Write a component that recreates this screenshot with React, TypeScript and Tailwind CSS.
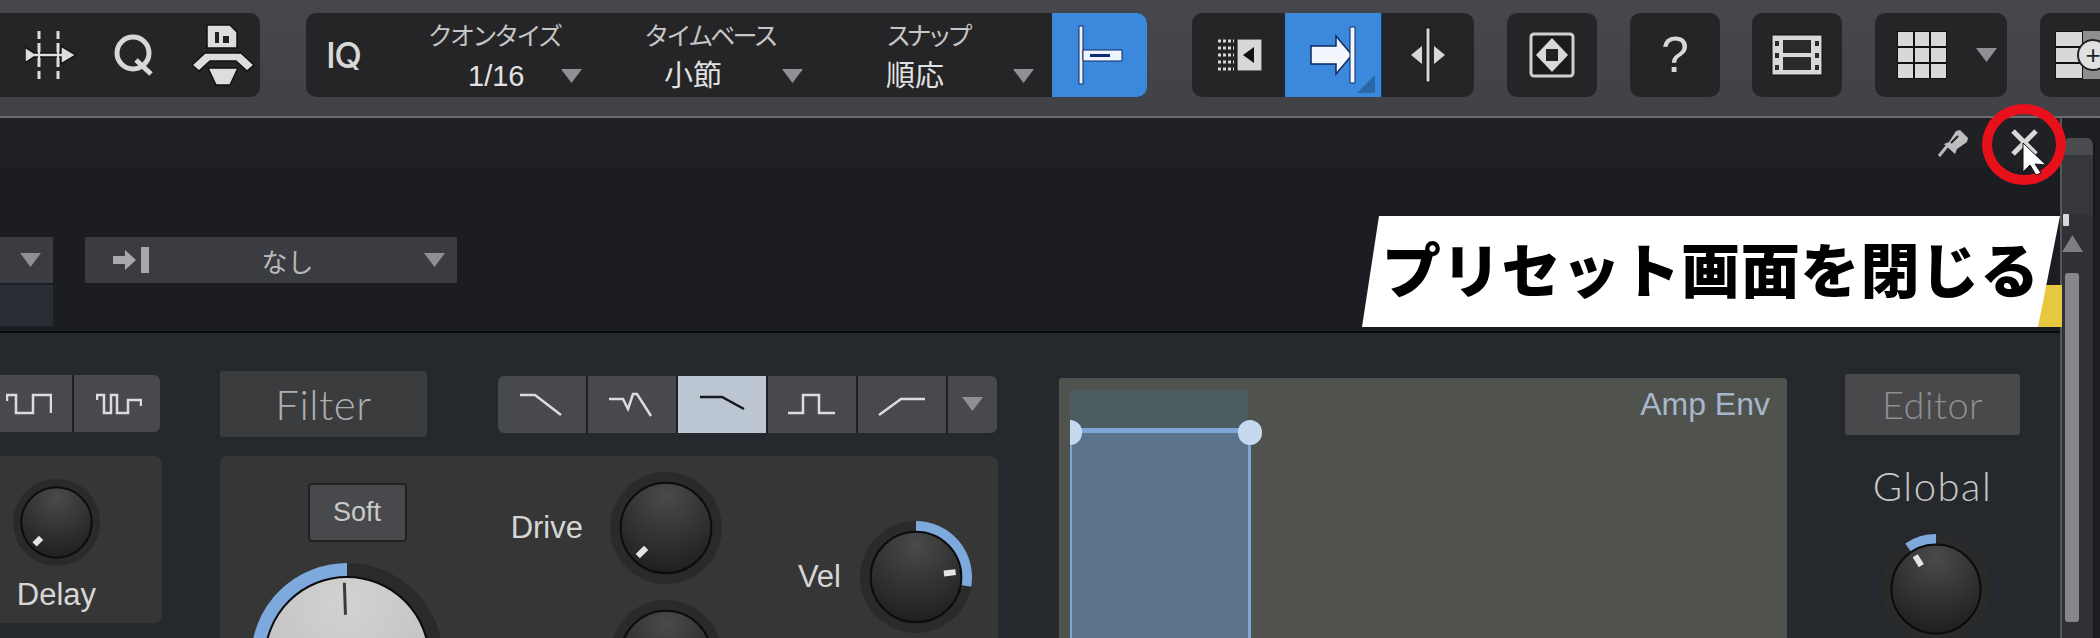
import React from "react";

const sans = "font-['Liberation_Sans','Noto_Sans_CJK_JP',sans-serif]";
const jp = "font-['Noto_Sans_CJK_JP',sans-serif]";

function Caret({ className = "" }: { className?: string }) {
  return (
    <svg viewBox="0 0 21 14" className={`w-[21px] h-[14px] shrink-0 ${className}`}>
      <path d="M0 0H21L10.5 14Z" fill="#8f9093" />
    </svg>
  );
}

function Arc({ r, from, to, width, color, size }: { r: number; from: number; to: number; width: number; color: string; size: number }) {
  const c = size / 2;
  const pt = (a: number) => {
    const t = ((a - 90) * Math.PI) / 180;
    return `${c + r * Math.cos(t)} ${c + r * Math.sin(t)}`;
  };
  return <path d={`M${pt(from)}A${r} ${r} 0 0 1 ${pt(to)}`} fill="none" stroke={color} strokeWidth={width} />;
}

// dial with a ring, optional value arc and a short tick
function Knob({ size = 112, angle, arc, light = false }: { size?: number; angle: number; arc?: [number, number]; light?: boolean }) {
  const c = size / 2;
  const outer = c;
  const inner = light ? c * 0.854 : c * 0.81;
  const t = ((angle - 90) * Math.PI) / 180;
  const id = `k${size}${angle}`;
  return (
    <svg width={size} height={size} viewBox={`0 0 ${size} ${size}`} className="shrink-0 block">
      <defs>
        <radialGradient id={id} cx="50%" cy="15%" r="85%">
          <stop offset="0%" stopColor={light ? "#d2d2d2" : "#4a4a4a"} />
          <stop offset="100%" stopColor={light ? "#bdbdbd" : "#1f1f1f"} />
        </radialGradient>
      </defs>
      <circle cx={c} cy={c} r={outer} fill="#2a2a2b" />
      {arc && <Arc size={size} r={(outer + inner) / 2} from={arc[0]} to={arc[1]} width={outer - inner} color="#7ea9dc" />}
      <circle cx={c} cy={c} r={inner} fill={`url(#${id})`} stroke="#0c0c0e" strokeWidth={2} />
      <line
        x1={c + Math.cos(t) * inner * (light ? 0.54 : 0.62)}
        y1={c + Math.sin(t) * inner * (light ? 0.54 : 0.62)}
        x2={c + Math.cos(t) * inner * (light ? 0.93 : 0.88)}
        y2={c + Math.sin(t) * inner * (light ? 0.93 : 0.88)}
        stroke={light ? "#3a3a3a" : "#e4e4e4"}
        strokeWidth={light ? 3 : 6}
      />
    </svg>
  );
}

function SelectCell({ label, value, labelClass, valueClass, rowClass }: { label: string; value: string; labelClass: string; valueClass: string; rowClass: string }) {
  return (
    <div className={`flex flex-col shrink-0 ${jp}`}>
      <div className={`text-[25px] leading-[30px] mt-[6px] text-[#c6c6c6] text-center ${labelClass}`}>{label}</div>
      <div className={`flex items-center mt-[10px] ${rowClass}`}>
        <span className={`text-[29px] leading-[34px] text-[#e2e2e2] ${sans} ${valueClass}`}>{value}</span>
        <Caret />
      </div>
    </div>
  );
}

function Box({ w, children, className = "" }: { w: number; children: React.ReactNode; className?: string }) {
  return (
    <div className={`h-[84px] flex items-center justify-center bg-[#252527] rounded-[10px] shrink-0 ${className}`} style={{ width: w }}>
      {children}
    </div>
  );
}

const stroke = { stroke: "#111", strokeWidth: 1.5 };

function Toolbar() {
  return (
    <div className="h-[118px] flex items-start pt-[13px] bg-gradient-to-b from-[#45474c] to-[#404247] border-b-2 border-[#6c6e72] shrink-0">
      {/* first group runs off the left edge */}
      <div className="w-[260px] h-[84px] bg-[#252527] rounded-r-[10px] shrink-0 flex items-center">
        <svg width="51" height="50" viewBox="0 0 51 50" className="ml-[25px]">
          <path d="M14 1v8M14 13v24M14 41v8M33 1v8M33 13v24M33 41v8" stroke="#ddd" strokeWidth="3" />
          <path d="M0 17l9 6h27v-7l15 9-15 9v-7H9l-9 6Z" fill="#ddd" {...stroke} />
          <path d="M14 14v22M33 14v22" stroke="#ddd" strokeWidth="2" />
        </svg>
        <div className="ml-[38px] w-[40px] flex justify-center">
          <svg width="40" height="42" viewBox="0 0 40 42">
            <ellipse cx="19" cy="19" rx="16" ry="16" fill="none" stroke="#d8d8d8" strokeWidth="5" />
            <path d="M22 26l15 14" stroke="#d8d8d8" strokeWidth="5" />
          </svg>
        </div>
        <svg width="62" height="62" viewBox="0 0 62 62" className="ml-[38px]">
          <path d="M15 1h23l7 7v16H15Z" fill="#ddd" {...stroke} />
          <path d="M23 8h4v11h-4ZM31 12h6v7h-6Z" fill="#222" />
          <path d="M0 41l13-12h36l13 12-7 6-11-10H18L7 47Z" fill="#ddd" {...stroke} />
          <path d="M16 44h30l-8 17H24Z" fill="#ddd" {...stroke} />
        </svg>
      </div>

      <div className="ml-[46px] w-[841px] h-[84px] bg-[#252527] rounded-[10px] shrink-0 flex overflow-hidden">
        <div className="w-[113px] shrink-0 pl-[20px] flex items-center font-['Inter',sans-serif] font-medium text-[36px] tracking-[-1.5px] text-[#d8d8d8]">IQ</div>
        <div className="w-[221px] shrink-0">
          <SelectCell label="クオンタイズ" value="1/16" labelClass="w-[150px] tracking-[-2.8px]" rowClass="pl-[49px]" valueClass="w-[93px]" />
        </div>
        <div className="w-[214px] shrink-0">
          <SelectCell label="タイムベース" value="小節" labelClass="w-[140px] tracking-[-2.8px]" rowClass="pl-[24px]" valueClass="w-[118px]" />
        </div>
        <div className="flex-1">
          <SelectCell label="スナップ" value="順応" labelClass="w-[146px] tracking-[-4.5px]" rowClass="pl-[32px]" valueClass="w-[127px]" />
        </div>
        <div className="w-[95px] shrink-0 bg-[#3b88dc] flex items-center justify-center">
          <svg width="48" height="60" viewBox="0 0 48 60">
            <path d="M3 1h4v58H3Z" fill="#eef4ff" stroke="#0b2a63" strokeWidth="1" />
            <path d="M7 25h39v11H7Z" fill="#eef4ff" stroke="#0b2a63" strokeWidth="1" />
            <path d="M14 29h20v3H14Z" fill="#0b2a70" />
          </svg>
        </div>
      </div>

      <div className="ml-[45px] w-[282px] h-[84px] bg-[#252527] rounded-[10px] shrink-0 flex overflow-hidden">
        <div className="w-[93px] shrink-0 flex items-center justify-center">
          <svg width="46" height="32" viewBox="0 0 46 32">
            <path d="M2 2h16M2 9h16M2 16h16M2 23h16M2 30h16" stroke="#d8d8d8" strokeWidth="3" strokeDasharray="3 2" />
            <path d="M21 0h25v32H21Z" fill="#d8d8d8" stroke="#111" />
            <path d="M38 8v16l-11-8Z" fill="#111" />
          </svg>
        </div>
        <div className="w-[97px] shrink-0 bg-[#3b88dc] relative flex items-center justify-center border-r border-[#123a78]">
          <svg width="46" height="58" viewBox="0 0 46 58">
            <path d="M1 20h25V10l16 19-16 19V38H1Z" fill="#f2f5fb" stroke="#0b2a63" strokeWidth="1.5" />
            <path d="M40 1h5v56h-5Z" fill="#f2f5fb" stroke="#0b2a63" strokeWidth="1" />
          </svg>
          <div className="absolute right-[6px] bottom-[4px] w-[18px] h-[18px] bg-[#2b66a8] [clip-path:polygon(100%_0,100%_100%,0_100%)]" />
        </div>
        <div className="flex-1 flex items-center justify-center">
          <svg width="36" height="56" viewBox="0 0 36 56">
            <path d="M16 1h4v54h-4Z" fill="#d8d8d8" stroke="#111" strokeWidth="1" />
            <path d="M12 19v18L1 28ZM24 19v18l11-9Z" fill="#d8d8d8" />
          </svg>
        </div>
      </div>

      <Box w={90} className="ml-[33px]">
        <svg width="46" height="46" viewBox="0 0 46 46">
          <rect x="2" y="2" width="42" height="42" rx="3" fill="#1b1b1c" stroke="#d0d0d0" strokeWidth="3" />
          <path d="M23 6l16 17-16 17L7 23Z" fill="#d8d8d8" />
          <path d="M17 17h12v12H17Z" fill="#222" />
        </svg>
      </Box>
      <Box w={90} className={`ml-[33px] text-[50px] text-[#d8d8d8] ${sans}`}>?</Box>
      <Box w={90} className="ml-[32px]">
        <svg width="52" height="44" viewBox="0 0 52 44">
          <path d="M1 2h50v40H1Z" fill="#d8d8d8" stroke="#111" />
          <path d="M12 7h28v13H12ZM12 24h28v13H12Z" fill="#2a2a2a" />
          <path d="M4 8h4v5H4ZM4 20h4v5H4ZM4 32h4v5H4ZM44 8h4v5h-4ZM44 20h4v5h-4ZM44 32h4v5h-4Z" fill="#2a2a2a" />
        </svg>
      </Box>
      <Box w={132} className="ml-[33px] gap-[29px] justify-start pl-[22px]">
        <div className="w-[50px] h-[48px] grid grid-cols-3 gap-[2px] bg-[#111] p-[1px] shrink-0">
          {Array.from({ length: 9 }).map((_, i) => (
            <span key={i} className="bg-[#d8d8d8]" />
          ))}
        </div>
        <Caret />
      </Box>
      <div className="ml-[33px] w-[61px] h-[84px] bg-[#252527] rounded-l-[10px] shrink-0 flex items-center pl-[15px] overflow-hidden">
        <div className="relative w-[60px] h-[48px] shrink-0 flex">
          <div className="w-[28px] grid grid-rows-3 gap-[2px] bg-[#111] p-[1px]">
            <span className="bg-[#d8d8d8]" />
            <span className="bg-[#d8d8d8]" />
            <span className="bg-[#d8d8d8]" />
          </div>
          <div className="flex-1 bg-[#8e8e8e]" />
          <div className={`absolute left-[22px] top-[8px] w-[32px] h-[32px] rounded-full bg-[#e0e0e0] border-2 border-[#222] flex items-center justify-center text-[26px] leading-none text-[#222] ${sans}`}>+</div>
        </div>
      </div>
    </div>
  );
}

function Wave({ d, w = 60 }: { d: string; w?: number }) {
  return (
    <svg width={w} height="24" viewBox={`0 0 ${w} 24`}>
      <path d={d} fill="none" stroke="#dcdcdc" strokeWidth="2.5" />
    </svg>
  );
}

function FilterType({ d, active = false }: { d: string; active?: boolean }) {
  return (
    <div className={`w-[90px] shrink-0 flex items-center justify-center border-r-2 border-[#1e2024] ${active ? "bg-[#bcc6d3]" : "bg-[#47494c]"}`}>
      <svg width="50" height="26" viewBox="0 0 50 26">
        <path d={d} fill="none" stroke={active ? "#16181c" : "#dcdcdc"} strokeWidth="2.5" />
      </svg>
    </div>
  );
}

function Lower() {
  return (
    <div className={`flex-1 min-h-0 flex items-start bg-[#25282c] border-t-2 border-[#08090a] overflow-hidden ${sans}`}>
      <div className="w-[162px] shrink-0 pt-[42px]">
        <div className="w-[160px] h-[57px] rounded-r-[6px] bg-[#47494c] flex overflow-hidden">
          <div className="w-[74px] flex items-center pl-[6px] border-r-2 border-[#1e2024]">
            <Wave w={46} d="M1 9V3H10V21H27V3H45V21" />
          </div>
          <div className="flex-1 flex items-center pl-[22px]">
            <Wave w={46} d="M1 8V3H8V21H15V3H21V21H32V8H45V14" />
          </div>
        </div>
        <div className="mt-[24px] h-[167px] bg-[#363636] rounded-r-[8px] pt-[23px] pl-[13px]">
          <Knob size={87} angle={-135} />
          <div className="w-[87px] text-center text-[31px] leading-[30px] text-[#d6d6d6] mt-[14px]">Delay</div>
        </div>
      </div>

      <div className="ml-[58px] w-[778px] shrink-0 pt-[38px]">
        <div className="h-[66px] flex items-center">
          <div className="w-[207px] h-[66px] bg-[#3b3c3e] rounded-[3px] flex items-center justify-center font-['Lato',sans-serif] font-light text-[42px] tracking-[0.5px] text-[#aeaeae]">Filter</div>
          <div className="ml-[71px] w-[499px] h-[57px] rounded-[6px] overflow-hidden flex">
            <FilterType d="M3 4h15l26 20" />
            <FilterType d="M2 8h14l5 10 5-15h4l14 22" />
            <FilterType active d="M3 6h22l22 12" />
            <FilterType d="M1 22h15V4h16v18h16" />
            <FilterType d="M2 24l22-16h24" />
            <div className="flex-1 bg-[#47494c] flex items-center justify-center">
              <Caret />
            </div>
          </div>
        </div>
        <div className="mt-[19px] h-[300px] bg-[#363636] rounded-t-[8px] flex items-start">
          <div className="w-[254px] shrink-0 pt-[27px] flex flex-col items-center">
            <div className="ml-[20px] w-[99px] h-[59px] rounded-[4px] bg-[#47494c] border-2 border-[#222] flex items-center justify-center text-[27px] text-[#c9c9c9]">Soft</div>
            <div className="mt-[21px]">
              <Knob size={192} angle={-2} arc={[-90, 0]} light />
            </div>
          </div>
          <div className="w-[248px] shrink-0 pt-[16px] flex flex-col items-end gap-[16px]">
            <div className="flex items-center gap-[27px]">
              <span className="text-[31px] text-[#d6d6d6]">Drive</span>
              <Knob angle={-135} />
            </div>
            <Knob angle={-134} />
          </div>
          <div className="flex-1 pt-[65px] pr-[26px] flex items-center justify-end gap-[19px]">
            <span className="text-[31px] text-[#d6d6d6]">Vel</span>
            <Knob angle={83} arc={[0, 100]} />
          </div>
        </div>
      </div>

      <div className="ml-[61px] mt-[45px] w-[728px] h-[300px] shrink-0 bg-[#50524e] rounded-t-[3px] relative flex pl-[11px] pt-[12px]">
        <div className="w-[181px] shrink-0 flex flex-col">
          <div className="w-[178px] h-[38px] bg-[#4c5c61]" />
          <div className="flex-1 bg-[#5b7489] border-t-[5px] border-r-[3px] border-l-[2px] border-[#7da7d6]" />
        </div>
        <div className="flex-1 flex justify-end pr-[17px]">
          <span className="text-[32px] leading-[30px] mt-[-1px] text-[#a7b7cb]">Amp Env</span>
        </div>
        <div className="absolute left-[11px] top-[42px] w-[12px] h-[25px] rounded-r-full bg-[#c7d9ee]" />
        <div className="absolute left-[179px] top-[42px] w-[24px] h-[25px] rounded-full bg-[#c7d9ee]" />
      </div>

      <div className="ml-[58px] mt-[41px] w-[175px] shrink-0 flex flex-col items-center">
        <div className="w-[175px] h-[61px] bg-[#49494b] rounded-[3px] flex items-center justify-center font-['Lato',sans-serif] font-light text-[38px] tracking-[0.5px] text-[#8f8f8f]">Editor</div>
        <div className="mt-[28px] font-['Lato',sans-serif] font-light text-[40px] leading-[46px] tracking-[1.5px] text-[#c8c8c8]">Global</div>
        <div className="mt-[25px] ml-[7px]">
          <Knob size={110} angle={-32} arc={[-34, 0]} />
        </div>
      </div>
    </div>
  );
}

function ScrollStrip() {
  return (
    <div className="w-[40px] shrink-0 bg-[#1d1f22] border-l-2 border-[#55575b] pt-[20px] pr-[5px]">
      <div className="h-full rounded-t-[8px] bg-[#2f3136] border-r-2 border-[#15171a] overflow-hidden relative">
        <div className="h-[17px] bg-[#4a4b4f]" />
        <div className="h-[60px] bg-[#35373b]" />
        <svg width="21" height="17" viewBox="0 0 21 17" className="block mt-[20px]">
          <path d="M10.5 0L21 17H0Z" fill="#7d7d82" />
        </svg>
        <div className="ml-[3px] mt-[21px] w-[14px] h-[349px] bg-[#87878b] rounded-[3px]" />
        <div className="absolute left-[1px] top-[76px] w-[6px] h-[12px] rounded-[1px] bg-[#d8d8d8]" />
      </div>
    </div>
  );
}

export default function App() {
  return (
    <div className="relative w-[2100px] h-[638px] overflow-hidden flex flex-col bg-[#25282c]">
      <Toolbar />
      <div className="flex-1 min-h-0 flex">
        <div className="w-[2060px] shrink-0 flex flex-col">
          <div className="h-[49px] shrink-0 bg-[#1f2125] flex items-center justify-end pr-[22px] gap-[42px]">
            <svg width="31" height="28" viewBox="0 0 31 28">
              <path d="M1 27l9-11" stroke="#bbb" strokeWidth="3" />
              <path d="M6 15l5-2 7-11 4-1 8 8-1 4-10 7-2 5Z" fill="#bdbdbd" />
              <path d="M13 14l7-7" stroke="#1f2125" strokeWidth="2" />
            </svg>
            <svg width="27" height="27" viewBox="0 0 27 27">
              <path d="M2 2l23 23M25 2L2 25" stroke="#d8d8d8" strokeWidth="5" />
            </svg>
          </div>
          <div className="h-[164px] shrink-0 bg-[#1b1d22] flex items-start pt-[70px]">
            <div className="w-[53px] shrink-0 flex flex-col gap-[2px]">
              <div className="h-[46px] bg-[#3a3c41] flex items-center justify-end pr-[12px]">
                <Caret />
              </div>
              <div className="h-[41px] bg-[#2a2d33]" />
            </div>
            <div className={`ml-[32px] w-[372px] h-[46px] bg-[#3a3c41] flex items-center pl-[28px] pr-[12px] ${jp}`}>
              <svg width="36" height="26" viewBox="0 0 36 26" className="shrink-0">
                <path d="M0 9h12V3l11 10-11 10v-6H0Z" fill="#a9a9ab" />
                <path d="M28 0h8v26h-8Z" fill="#a9a9ab" />
              </svg>
              <span className="flex-1 text-center text-[26px] text-[#b9b9b9] pl-[2px]">なし</span>
              <Caret />
            </div>
          </div>
          <Lower />
        </div>
        <ScrollStrip />
      </div>

      {/* caption and click highlight lying over the panel */}
      <div className="absolute left-[2030px] top-[285px] w-[32px] h-[42px] bg-[#e6c840]" />
      <div className="absolute left-[1362px] top-[216px] w-[698px] h-[111px] bg-white [clip-path:polygon(17px_0,100%_0,676px_100%,0_100%)] flex items-center justify-start pl-[20px] pb-[8px]">
        <span className={`${jp} font-black text-[59px] leading-none text-black whitespace-nowrap tracking-[0.8px]`}>プリセット画面を閉じる</span>
      </div>
      <div className="absolute left-[1982px] top-[104px] w-[84px] h-[81px] rounded-[50%] border-[10px] border-[#e8101a]" />
      <svg width="26" height="34" viewBox="0 0 26 34" className="absolute left-[2022px] top-[142px]">
        <path d="M1 1l23 22-11-1 6 9-5 2-6-10-7 7Z" fill="#fff" stroke="#111" strokeWidth="1" />
      </svg>
    </div>
  );
}
